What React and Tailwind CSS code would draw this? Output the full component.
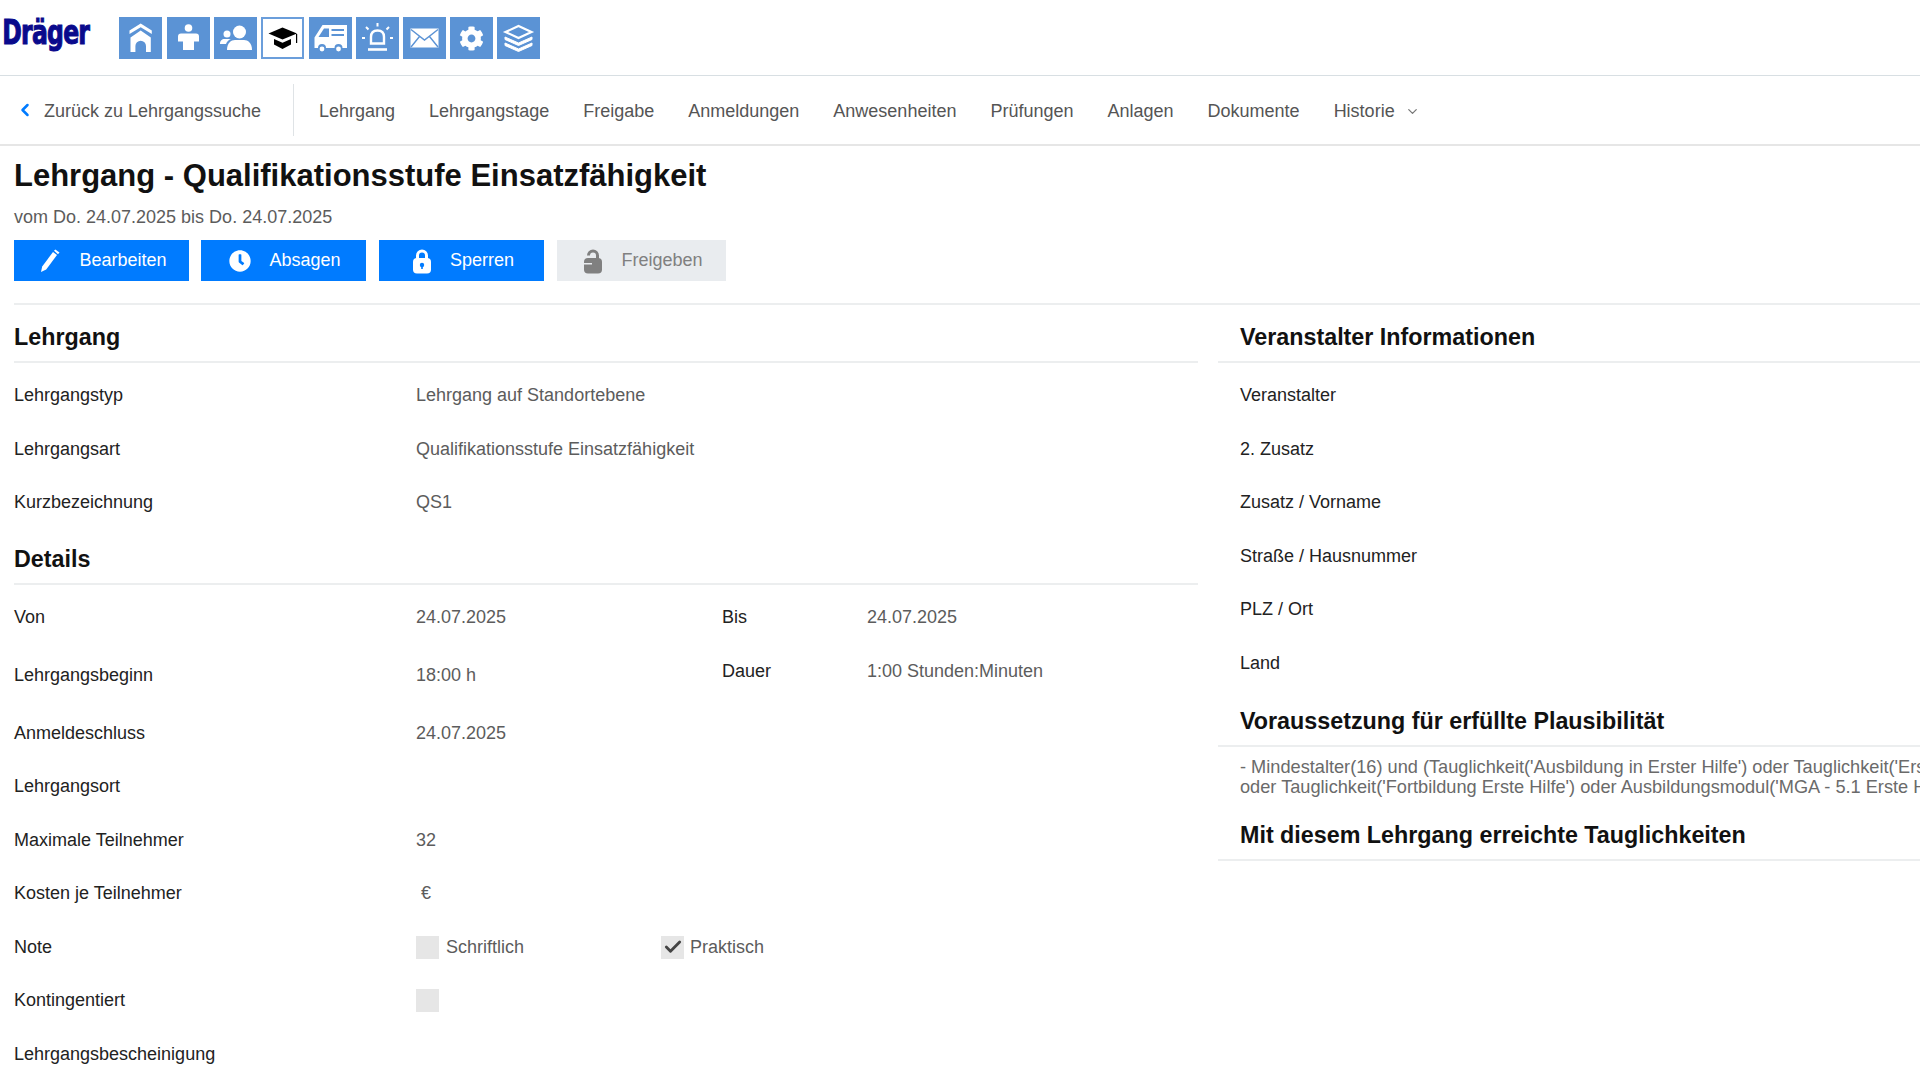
import { ChevronLeft, ChevronDown, Check } from 'lucide-react';
import { FaCog, FaClock } from 'react-icons/fa';

const tabs = ['Lehrgang', 'Lehrgangstage', 'Freigabe', 'Anmeldungen', 'Anwesenheiten', 'Prüfungen', 'Anlagen', 'Dokumente'];

const HomeIcon = () => (
    <svg viewBox="0 0 43 42" className="w-full h-full" fill="#fff">
        <path d="M10.5 13.5 21.7 6.5 32.8 13.5V17L21.7 10.2 10.5 17Z" />
        <path d="M11.5 20.5 21.7 13.5 31.8 20.5V35H27V29A5.3 5.3 0 0 0 16.4 29V35H11.5Z" />
    </svg>
);

const PersonIcon = () => (
    <svg viewBox="0 0 43 42" className="w-full h-full" fill="#fff">
        <circle cx="21.5" cy="11" r="3.8" />
        <path d="M14 16.5H29C31 16.5 32 17.5 32 19.5V24.5H27V33H16V24.5H11V19.5C11 17.5 12 16.5 14 16.5Z" />
    </svg>
);

const PeopleIcon = () => (
    <svg viewBox="0 0 43 42" className="w-full h-full" fill="#fff">
        <circle cx="25.5" cy="15" r="6.5" />
        <path d="M13 33C13 26 17 23 21 23H30C34 23 38 26 38 33Z" />
        <circle cx="13" cy="17" r="3.5" />
        <path d="M6 27C6 23.5 8 22 10.5 22H17C14.5 23 13 24.5 12 27Z" />
    </svg>
);

const CapIcon = () => (
    <svg viewBox="0 0 43 42" className="w-[43px] h-[42px] shrink-0" fill="#000">
        <path d="M7.5 16.5 21.5 10.5 36 16.5 21.5 22.5Z" />
        <path d="M13 22 21.5 25.8 30 22V27.5L21.5 32 13 27.5Z" />
        <path d="M35 17H36.2V26H35Z" />
    </svg>
);

const AmbulanceIcon = () => (
    <svg viewBox="0 0 43 42" className="w-full h-full" fill="none">
        <path d="M5.5 31V20.5L13.5 8H38V31H33.5A4 4 0 0 0 25.5 31H17A4 4 0 0 0 9 31Z" fill="#fff" />
        <path d="M9.5 20 15 11.5H20V20Z" fill="#5b93d5" />
        <path d="M22.5 13H35M22.5 18H35" stroke="#5b93d5" strokeWidth="2.2" />
        <path d="M22 23H35.5" stroke="#fff" strokeWidth="1" />
        <circle cx="13" cy="32" r="2.4" fill="#fff" />
        <circle cx="29.5" cy="32" r="2.4" fill="#fff" />
    </svg>
);

const SirenIcon = () => (
    <svg viewBox="0 0 43 42" className="w-full h-full" fill="none" stroke="#fff" strokeWidth="2">
        <path d="M15 26.5V20C15 16 17.5 13.5 21.5 13.5S28 16 28 20V26.5Z" strokeWidth="2.4" />
        <path d="M12 32.5H31" strokeWidth="2.6" />
        <path d="M21.5 6V9.5M10 10 12.5 12.5M33 10 30.5 12.5M6 21H9M34 21H37" />
    </svg>
);

const MailIcon = () => (
    <svg viewBox="0 0 43 42" className="w-full h-full">
        <path d="M7.5 11.5H35.5V30.5H7.5Z" fill="#fff" />
        <path d="M8 12.5 21.5 23 35 12.5M8 30 16.5 19.5M35 30 26.5 19.5" fill="none" stroke="#5b93d5" strokeWidth="1.4" />
    </svg>
);

const LayersIcon = () => (
    <svg viewBox="0 0 43 42" className="w-full h-full" fill="none" stroke="#fff">
        <path d="M8.5 15 21.5 9 34.5 15 21.5 21Z" strokeWidth="2.2" />
        <path d="M8 20V22.5L21.5 28.5 35 22.5V20L21.5 26Z" fill="#fff" strokeWidth="1" />
        <path d="M8 26V28.5L21.5 34.5 35 28.5V26L21.5 32Z" fill="#fff" strokeWidth="1" />
    </svg>
);

const PencilIcon = () => (
    <svg viewBox="0 0 22 24" className="w-[22px] h-[24px]" fill="#fff">
        <path d="M2 23 3.2 17.5 14 3 18 6 7.2 20.5Z" />
        <path d="M15 1.8 16.3 0.5 20.5 3.5 19 5.2Z" />
    </svg>
);

const LockIcon = () => (
    <svg viewBox="0 0 20 26" className="w-[20px] h-[26px]">
        <path d="M5.5 11V7.500A4.500 4.500 0 0 1 14.500 7.500V11" fill="none" stroke="#fff" strokeWidth="3" />
        <rect x="1" y="10" width="18" height="15.500" rx="4" fill="#fff" />
        <circle cx="10" cy="17" r="2.200" fill="#007bff" />
        <rect x="9.200" y="17" width="1.600" height="4" fill="#007bff" />
    </svg>
);

const OpenLockIcon = () => (
    <svg viewBox="0 0 20 26" className="w-[20px] h-[26px]">
        <path d="M5.500 7.500A4.500 4.500 0 0 1 14.500 7.500V11" fill="none" stroke="#808080" strokeWidth="3" />
        <rect x="1" y="10" width="18" height="15.500" rx="4" fill="#808080" />
        <rect x="1" y="15" width="8" height="1.500" fill="#e9ecef" />
    </svg>
);

const navTiles = [
    { icon: <HomeIcon />, cls: 'ml-0' },
    { icon: <PersonIcon />, cls: 'ml-[5px]' },
    { icon: <PeopleIcon />, cls: 'ml-[4px]' },
    { icon: <CapIcon />, cls: 'ml-[4px]', active: true },
    { icon: <AmbulanceIcon />, cls: 'ml-[5px]' },
    { icon: <SirenIcon />, cls: 'ml-[4px]' },
    { icon: <MailIcon />, cls: 'ml-[4px]' },
    { icon: <FaCog className="w-[25px] h-[25px] text-white" />, cls: 'ml-[4px]' },
    { icon: <LayersIcon />, cls: 'ml-[4px]' },
];

function Heading({ children, className = '' }) {
    return (
        <h2 className={`h-[41px] flex items-start border-b-2 border-[#eceeef] text-[23.3px] leading-[30px] font-bold text-[#111] ${className}`}>
            {children}
        </h2>
    );
}

function Row({ label, children }) {
    return (
        <div className="flex h-[53.5px] items-center text-[18px] text-[#222]">
            <div className="w-[402px] shrink-0">{label}</div>
            <div className="flex-1 text-[#5c5c5c]">{children}</div>
        </div>
    );
}

function Box({ checked }) {
    return (
        <span className="w-[23px] h-[23px] bg-[#e6e6e6] flex items-center justify-center shrink-0">
            {checked && <Check size={20} strokeWidth={3.4} className="text-[#444]" />}
        </span>
    );
}

function ActionButton({ icon, label, disabled, className = '' }) {
    return (
        <button className={`h-[41px] pl-[3px] flex items-center justify-center gap-[18px] text-[18px] ${disabled ? 'bg-[#e9ecef] text-[#808080]' : 'bg-[#007bff] text-white'} ${className}`}>
            {icon}
            {label}
        </button>
    );
}

export default function App() {
    return (
        <div className="h-screen overflow-hidden bg-white [font-family:'Liberation_Sans',Arial,sans-serif]">
            {/* Top bar */}
            <div className="h-[76px] flex items-start border-b border-[#d8dfe3]">
                <div className="w-[119px] pl-[3px] pt-[10px] text-[34px] leading-[44px] font-bold text-[#0a0a8c] tracking-[-1px] [-webkit-text-stroke:1px_#0a0a8c] [font-family:'DejaVu_Sans_Condensed','DejaVu_Sans',sans-serif] scale-x-[0.77] origin-left">
                    Dräger
                </div>
                <div className="flex pt-[17px]">
                    {navTiles.map((t, i) => (
                        <div
                            key={i}
                            className={`w-[43px] h-[42px] flex items-center justify-center ${t.cls} ${t.active ? 'bg-white border-2 border-[#6b9edb]' : 'bg-[#5b93d5]'}`}
                        >
                            {t.icon}
                        </div>
                    ))}
                </div>
            </div>

            {/* Tabs */}
            <div className="h-[70px] flex items-center border-b-2 border-[#e6e6e6] text-[18px] text-[#555]">
                <div className="w-[294px] h-[52px] flex items-center border-r border-[#dfe3e6] pl-[15px] gap-[9px]">
                    <ChevronLeft size={20} strokeWidth={3} className="text-[#007bff]" />
                    <span className="pt-[3px]">Zurück zu Lehrgangssuche</span>
                </div>
                <div className="flex items-center gap-[34px] pl-[25px] pt-[3px]">
                    {tabs.map((t) => (
                        <span key={t}>{t}</span>
                    ))}
                    <span className="flex items-center gap-[10px]">
                        Historie
                        <ChevronDown size={15} strokeWidth={2} className="text-[#777]" />
                    </span>
                </div>
            </div>

            {/* Title block */}
            <div className="px-[14px] pt-[10px]">
                <h1 className="text-[31px] leading-[40px] font-bold text-[#111]">Lehrgang - Qualifikationsstufe Einsatzfähigkeit</h1>
                <p className="mt-[10px] text-[18px] leading-[22px] text-[#5c5c5c]">vom Do. 24.07.2025 bis Do. 24.07.2025</p>
                <div className="flex mt-[12px]">
                    <ActionButton className="w-[175px]" icon={<PencilIcon />} label="Bearbeiten" />
                    <ActionButton className="w-[165px] ml-[12px]" icon={<FaClock size={22} />} label="Absagen" />
                    <ActionButton className="w-[165px] ml-[13px]" icon={<LockIcon />} label="Sperren" />
                    <ActionButton className="w-[169px] ml-[13px]" disabled icon={<OpenLockIcon />} label="Freigeben" />
                </div>
            </div>
            <div className="ml-[14px] mt-[22px] border-b-2 border-[#eceeef]"></div>

            {/* Columns */}
            <div className="flex pt-[17px] pl-[14px]">
                <div className="w-[1184px] shrink-0">
                    <Heading>Lehrgang</Heading>
                    <div className="pt-[6px]">
                        <Row label="Lehrgangstyp">Lehrgang auf Standortebene</Row>
                        <Row label="Lehrgangsart">Qualifikationsstufe Einsatzfähigkeit</Row>
                        <Row label="Kurzbezeichnung">QS1</Row>
                    </div>
                    <Heading className="mt-[14px]">Details</Heading>
                    <div className="pt-[7px]">
                        <div className="flex h-[52px] items-center text-[18px] text-[#222]">
                            <div className="w-[402px] shrink-0">Von</div>
                            <div className="w-[306px] shrink-0 text-[#5c5c5c]">24.07.2025</div>
                            <div className="w-[145px] shrink-0">Bis</div>
                            <div className="text-[#5c5c5c]">24.07.2025</div>
                        </div>
                        <div className="flex h-[63px] items-center text-[18px] text-[#222]">
                            <div className="w-[402px] shrink-0">Lehrgangsbeginn</div>
                            <div className="w-[306px] shrink-0 text-[#5c5c5c]">18:00 h</div>
                            <div className="w-[145px] shrink-0 pb-[8px]">Dauer</div>
                            <div className="pb-[8px] text-[#5c5c5c]">1:00 Stunden:Minuten</div>
                        </div>
                        <Row label="Anmeldeschluss">24.07.2025</Row>
                        <Row label="Lehrgangsort"></Row>
                        <Row label="Maximale Teilnehmer">32</Row>
                        <Row label="Kosten je Teilnehmer"><span className="pl-[5px]">€</span></Row>
                        <Row label="Note">
                            <div className="flex items-center">
                                <Box />
                                <span className="ml-[7px] w-[215px]">Schriftlich</span>
                                <Box checked />
                                <span className="ml-[6px]">Praktisch</span>
                            </div>
                        </Row>
                        <Row label="Kontingentiert"><Box /></Row>
                        <Row label="Lehrgangsbescheinigung"></Row>
                    </div>
                </div>

                <div className="ml-[20px] flex-1 min-w-0 overflow-hidden">
                    <Heading className="pl-[22px]">Veranstalter Informationen</Heading>
                    <div className="pt-[6px] pl-[22px] text-[18px] text-[#222]">
                        {['Veranstalter', '2. Zusatz', 'Zusatz / Vorname', 'Straße / Hausnummer', 'PLZ / Ort', 'Land'].map((l) => (
                            <div key={l} className="h-[53.5px] flex items-center">{l}</div>
                        ))}
                    </div>
                    <Heading className="mt-[16px] pl-[22px]">Voraussetzung für erfüllte Plausibilität</Heading>
                    <div className="pl-[22px] pt-[10px] text-[18.2px] leading-[20px] text-[#6a6a6a] whitespace-nowrap">
                        <p>- Mindestalter(16) und (Tauglichkeit('Ausbildung in Erster Hilfe') oder Tauglichkeit('Erste Hilfe')</p>
                        <p>oder Tauglichkeit('Fortbildung Erste Hilfe') oder Ausbildungsmodul('MGA - 5.1 Erste Hilfe'))</p>
                    </div>
                    <Heading className="mt-[23px] pl-[22px]">Mit diesem Lehrgang erreichte Tauglichkeiten</Heading>
                </div>
            </div>
        </div>
    );
}
